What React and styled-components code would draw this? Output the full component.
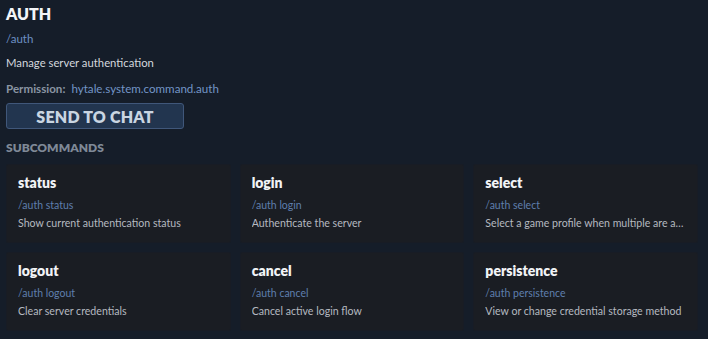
import React from "react";
import styled, { createGlobalStyle } from "styled-components";

const Global = createGlobalStyle`
  html, body { margin: 0; padding: 0; background: #151d29; }
  body { font-family: Lato, "Noto Sans", sans-serif; }
  * { box-sizing: border-box; }
`;

const Page = styled.div`
  width: 708px;
  min-height: 339px;
  padding: 4px 10px 8px 6px;
  background: #151d29;
  color: #e6e9ee;
  display: flex;
  flex-direction: column;
`;

const Title = styled.h1`
  margin: 0;
  font-size: 16px;
  font-weight: 800;
  line-height: 20px;
  color: #f3f5f8;
`;

const CmdPath = styled.div`
  margin-top: 7px;
  font-size: 11.5px;
  line-height: 15px;
  color: #6d90c4;
`;

const Desc = styled.p`
  margin: 9px 0 0;
  font-size: 11.3px;
  line-height: 15px;
  color: #d3d7dd;
`;

const PermRow = styled.div`
  margin-top: 10.5px;
  display: flex;
  gap: 6px;
  font-size: 11.6px;
  line-height: 15px;
`;

const PermLabel = styled.span`
  font-weight: 700;
  color: #8a95a3;
`;

const PermValue = styled.span`
  color: #7395c7;
`;

const SendButton = styled.button`
  margin-top: 7.5px;
  align-self: flex-start;
  width: 178px;
  height: 26px;
  padding: 0;
  background: #22354f;
  border: 1px solid #40577a;
  border-radius: 3px;
  color: #c9d5e2;
  font-family: Lato, "Noto Sans", sans-serif;
  font-size: 16px;
  font-weight: 800;
  letter-spacing: 0.2px;
  cursor: pointer;
`;

const SectionLabel = styled.h2`
  margin: 11px 0 0;
  font-size: 12px;
  font-weight: 800;
  line-height: 16px;
  color: #7f8997;
`;

const Grid = styled.div`
  margin-top: 8px;
  display: grid;
  grid-template-columns: repeat(3, 1fr);
  gap: 9px;
`;

const Card = styled.div`
  background: #1a1d23;
  border: 1px solid #181c25;
  border-radius: 2px;
  padding: 9px 11px 8px;
  height: 79px;
  display: flex;
  flex-direction: column;
  min-width: 0;
`;

const CardTitle = styled.div`
  font-size: 14px;
  font-weight: 800;
  line-height: 17px;
  color: #f1f3f6;
`;

const CardCmd = styled.div`
  margin-top: 7px;
  font-size: 10.5px;
  line-height: 14px;
  color: #5f7fae;
`;

const CardDesc = styled.div`
  margin-top: 4px;
  font-size: 10.6px;
  line-height: 14px;
  color: #b5b9c0;
  white-space: nowrap;
  overflow: hidden;
  text-overflow: ellipsis;
`;

const subs = [
  { name: "status", desc: "Show current authentication status" },
  { name: "login", desc: "Authenticate the server" },
  { name: "select", desc: "Select a game profile when multiple are available" },
  { name: "logout", desc: "Clear server credentials" },
  { name: "cancel", desc: "Cancel active login flow" },
  { name: "persistence", desc: "View or change credential storage method" },
];

export default function App() {
  return (
    <>
      <Global />
      <Page>
        <Title>AUTH</Title>
        <CmdPath>/auth</CmdPath>
        <Desc>Manage server authentication</Desc>
        <PermRow>
          <PermLabel>Permission:</PermLabel>
          <PermValue>hytale.system.command.auth</PermValue>
        </PermRow>
        <SendButton>SEND TO CHAT</SendButton>
        <SectionLabel>SUBCOMMANDS</SectionLabel>
        <Grid>
          {subs.map((s) => (
            <Card key={s.name}>
              <CardTitle>{s.name}</CardTitle>
              <CardCmd>/auth {s.name}</CardCmd>
              <CardDesc>{s.desc}</CardDesc>
            </Card>
          ))}
        </Grid>
      </Page>
    </>
  );
}
